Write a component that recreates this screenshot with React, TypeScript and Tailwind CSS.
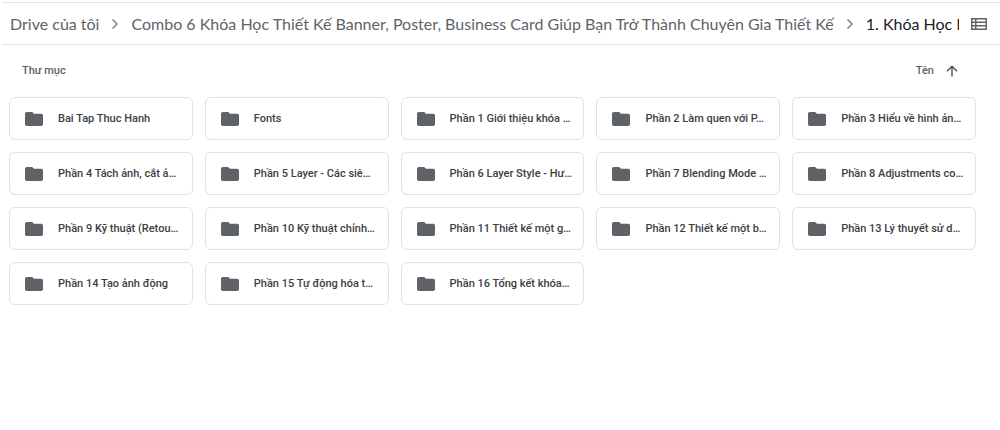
import React from "react";

const folders: string[] = [
  "Bai Tap Thuc Hanh",
  "Fonts",
  "Phần 1 Giới thiệu khóa …",
  "Phần 2 Làm quen với P…",
  "Phần 3 Hiểu về hình ản…",
  "Phần 4 Tách ảnh, cắt ả…",
  "Phần 5 Layer - Các siê…",
  "Phần 6 Layer Style - Hư…",
  "Phần 7 Blending Mode …",
  "Phần 8 Adjustments co…",
  "Phần 9 Kỹ thuật (Retou…",
  "Phần 10 Kỹ thuật chỉnh…",
  "Phần 11 Thiết kế một g…",
  "Phần 12 Thiết kế một b…",
  "Phần 13 Lý thuyết sử d…",
  "Phần 14 Tạo ảnh động",
  "Phần 15 Tự động hóa t…",
  "Phần 16 Tổng kết khóa…",
];

function Separator() {
  return (
    <svg aria-hidden="true" viewBox="0 0 8 12" className="mx-3 h-3 w-2 shrink-0 fill-none stroke-[#80868b]" strokeWidth="1.6">
      <path d="M1.5 1.5 6 6l-4.5 4.5" />
    </svg>
  );
}

function FolderIcon() {
  return (
    <svg aria-hidden="true" viewBox="2 4 20 16" className="h-3.5 w-[18px] shrink-0 fill-[#5f6368]" preserveAspectRatio="none">
      <path d="M10 4H4c-1.1 0-1.99.9-1.99 2L2 18c0 1.1.9 2 2 2h16c1.1 0 2-.9 2-2V8c0-1.1-.9-2-2-2h-8l-2-2z" />
    </svg>
  );
}

function FolderCard({ name }: { name: string }) {
  return (
    <li>
      <button
        type="button"
        className="flex h-[43px] w-full items-center gap-[15px] overflow-hidden rounded-md border border-[#dfe1e4] bg-white pl-[15px] text-left"
      >
        <FolderIcon />
        <span className="whitespace-nowrap text-[11px] leading-4 font-medium text-[#3c4043]">{name}</span>
      </button>
    </li>
  );
}

export default function App() {
  return (
    <main className="bg-white pt-0.5 font-['Roboto','Liberation_Sans',sans-serif] text-[#5f6368]">
      <header className="ml-0.5 flex h-[43px] items-center border-y border-[#e3e4e6] pr-[13px]">
        <nav aria-label="Đường dẫn" className="min-w-0 flex-1 overflow-hidden pl-2 font-['Lato','Liberation_Sans',sans-serif]">
          <ol className="flex items-center whitespace-nowrap text-base leading-6">
            <li className="flex items-center">
              <a href="#drive">Drive của tôi</a>
              <Separator />
            </li>
            <li className="flex items-center">
              <a href="#combo">Combo 6 Khóa Học Thiết Kế Banner, Poster, Business Card Giúp Bạn Trở Thành Chuyên Gia Thiết Kế</a>
              <Separator />
            </li>
            <li>
              <a href="#khoa-hoc" aria-current="page" className="text-[#202124]">1. Khóa Học Dạy</a>
            </li>
          </ol>
        </nav>
        <button type="button" aria-label="Chế độ xem danh sách" className="ml-3 shrink-0">
          <svg aria-hidden="true" viewBox="0 0 16 12" className="h-3 w-4 fill-[#5f6368]">
            <path fillRule="evenodd" d="M0 0h16v12H0zM1.5 1.5v2H4v-2zm4 0v2h9v-2zm-4 3.5v2H4V5zm4 0v2h9V5zm-4 3.5v2H4v-2zm4 0v2h9v-2z" />
          </svg>
        </button>
      </header>

      <section className="pr-6 pl-[9px]">
        <div className="flex h-[52px] items-center justify-between pr-[18px] pl-[13px] text-[11px] leading-4 font-medium">
          <h2>Thư mục</h2>
          <button type="button" className="flex items-center gap-3">
            Tên
            <svg aria-hidden="true" viewBox="0 0 12 12" className="size-3 fill-none stroke-[#4b4f53]" strokeWidth="1.4">
              <path d="M6 11.5V1.5M1 6.2l5-5 5 5" />
            </svg>
          </button>
        </div>
        <ul className="grid grid-cols-5 gap-3">
          {folders.map((name) => (
            <FolderCard key={name} name={name} />
          ))}
        </ul>
      </section>
    </main>
  );
}
